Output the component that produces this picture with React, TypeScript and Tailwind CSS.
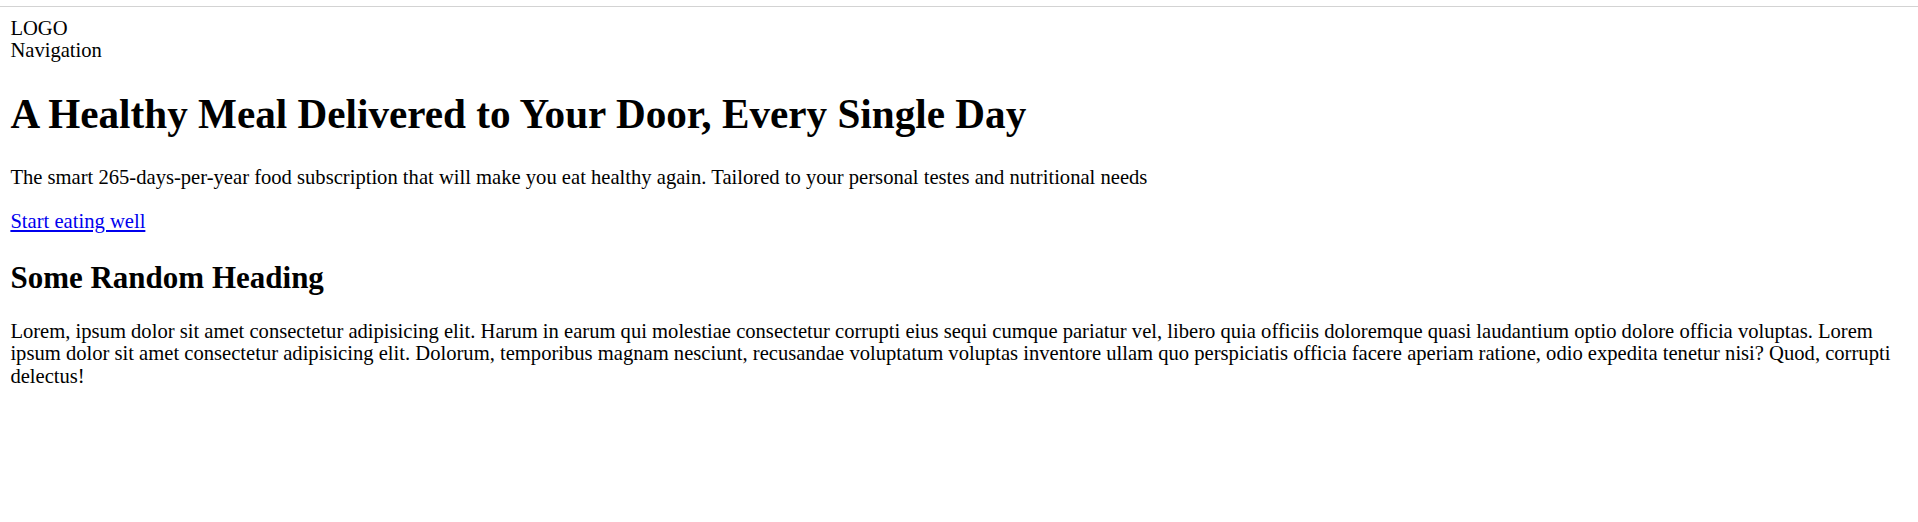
export default function App() {
  return (
    <div className="min-h-screen bg-white text-black font-['Liberation_Serif',serif] text-[20.6px] leading-[22.7px]">
      <div className="h-[6px]" />
      <div className="border-t border-[#d3d3d3]" />

      <div className="px-[10.4px] pt-[9.7px]">
        {/* Header */}
        <header>
          <div>LOGO</div>
          <nav>Navigation</nav>
        </header>

        {/* Hero */}
        <section>
          <h1 className="text-[41.2px] leading-[45.6px] font-bold mt-[30.2px] mb-[27.8px]">
            A Healthy Meal Delivered to Your Door, Every Single Day
          </h1>
          <p className="mb-[21.6px]">
            The smart 265-days-per-year food subscription that will make you eat healthy again. Tailored to your personal testes and nutritional needs
          </p>
          <div>
            <a href="#" className="text-[#0000ee] underline">
              Start eating well
            </a>
          </div>
        </section>

        {/* Content */}
        <section>
          <h2 className="text-[31px] leading-[34.2px] font-bold mt-[28.5px] mb-[24.3px]">
            Some Random Heading
          </h2>
          <p>
            Lorem, ipsum dolor sit amet consectetur adipisicing elit. Harum in earum qui molestiae consectetur corrupti eius sequi cumque pariatur vel, libero quia officiis doloremque quasi laudantium optio dolore officia voluptas. Lorem ipsum dolor sit amet consectetur adipisicing elit. Dolorum, temporibus magnam nesciunt, recusandae voluptatum voluptas inventore ullam quo perspiciatis officia facere aperiam ratione, odio expedita tenetur nisi? Quod, corrupti delectus!
          </p>
        </section>
      </div>
    </div>
  );
}
